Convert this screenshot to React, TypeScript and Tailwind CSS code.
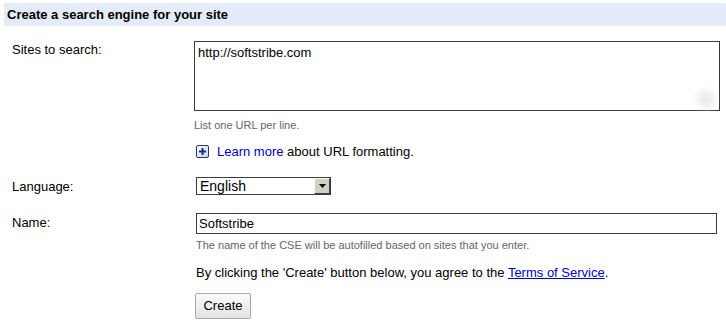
import React from 'react';

/* ─── Create CSE form ─── */

function PlusIcon() {
  return (
    <svg width="13" height="13" viewBox="0 0 13 13" className="shrink-0">
      <defs>
        <linearGradient id="pg" x1="0" y1="0" x2="1" y2="1">
          <stop offset="0" stopColor="#ffffff" />
          <stop offset="1" stopColor="#c9d3e6" />
        </linearGradient>
      </defs>
      <rect x="0.5" y="0.5" width="12" height="12" rx="1.5" fill="url(#pg)" stroke="#2a3a6e" />
      <rect x="3" y="5.5" width="7" height="2" fill="#1a2a8a" />
      <rect x="5.5" y="3" width="2" height="7" fill="#1a2a8a" />
    </svg>
  );
}

export default function App() {
  return (
    <div className="w-[726px] h-[325px] bg-white text-black text-[13px] font-['Liberation_Sans',Arial,sans-serif] overflow-hidden">
      {/* Header band */}
      <div className="mt-[3px] ml-[4px] h-[23px] bg-[#e5ecf9] pl-[3px] font-bold leading-[23px]">
        Create a search engine for your site
      </div>

      {/* Sites to search */}
      <div className="flex mt-[15px]">
        <div className="w-[194px] pl-[12px] leading-[15px] pt-[1px]">Sites to search:</div>
        <div className="flex-1 pr-[6px]">
          <div className="relative h-[70px] w-[526px] border border-[#3c3c3c] px-[3px] pt-[3px] leading-[16px]">
            http://softstribe.com
            <div className="absolute right-[4px] bottom-[2px] w-[18px] h-[18px] rounded-full bg-[#ececec] blur-[3px]" />
          </div>
          <div className="mt-[7px] text-[11px] leading-[14px] text-[#666]">List one URL per line.</div>
          <div className="mt-[12px] ml-[2px] flex items-center gap-[8px] leading-[15px]">
            <PlusIcon />
            <span>
              <span className="text-[#0000cc]">Learn more</span> about URL formatting.
            </span>
          </div>
        </div>
      </div>

      {/* Language */}
      <div className="flex mt-[18px] items-center">
        <div className="w-[196px] pl-[12px] leading-[15px]">Language:</div>
        <div className="w-[135px] h-[18px] border border-[#3c3c3c] flex items-stretch">
          <span className="flex-1 pl-[3px] text-[14px] leading-[16px]">English</span>
          <span className="w-[16px] bg-[#d4d0c8] border-t border-l border-white border-r-[#404040] border-b-[#404040] border-r border-b flex items-center justify-center">
            <svg width="7" height="4" viewBox="0 0 7 4">
              <path d="M0 0h7L3.5 4z" fill="#000" />
            </svg>
          </span>
        </div>
      </div>

      {/* Name */}
      <div className="flex mt-[18px]">
        <div className="w-[196px] pl-[12px] leading-[15px] pt-[2px]">Name:</div>
        <div className="flex-1">
          <div className="w-[521px] h-[21px] border border-[#3c3c3c] pl-[2px] leading-[19px] text-[13px]">
            Softstribe
          </div>
          <div className="mt-[4px] text-[11px] leading-[14px] text-[#666]">
            The name of the CSE will be autofilled based on sites that you enter.
          </div>
          <div className="mt-[13px] leading-[15px]">
            By clicking the &apos;Create&apos; button below, you agree to the{' '}
            <span className="text-[#0000cc] underline">Terms of Service</span>.
          </div>
          <button className="mt-[13px] -ml-[1px] h-[26px] w-[56px] rounded-[2px] border border-[#a9a9a9] bg-gradient-to-b from-[#fbfbfb] to-[#e3e3e3] text-[13px] leading-[24px] text-black">
            Create
          </button>
        </div>
      </div>
    </div>
  );
}
